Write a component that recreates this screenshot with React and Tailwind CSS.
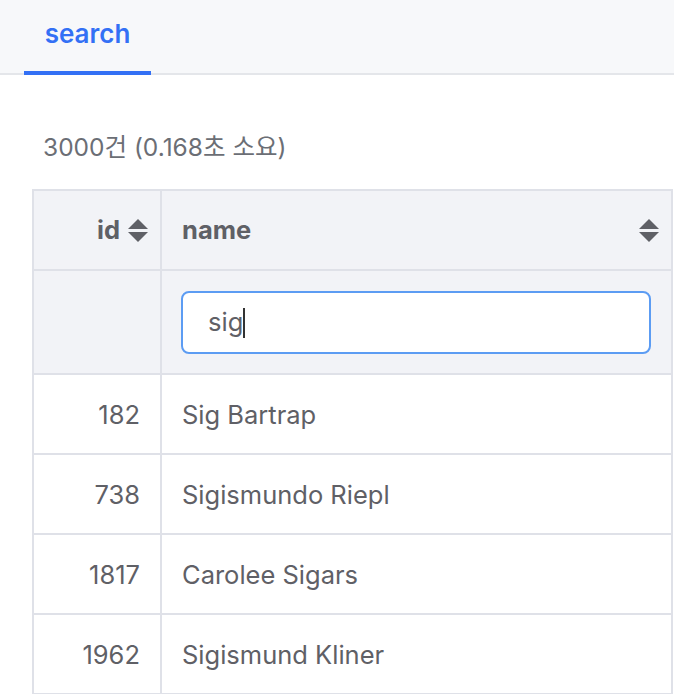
import React from 'react';

// --- sort icon (up / down triangles) ---
const SortIcon = () => (
    <svg width="20" height="23" viewBox="0 0 20 23" className="shrink-0">
        <path d="M10 0 L20 10 L0 10 Z" fill="#5f6066" />
        <path d="M0 13 L20 13 L10 23 Z" fill="#5f6066" />
    </svg>
);

const rows = [
    { id: 182, name: 'Sig Bartrap' },
    { id: 738, name: 'Sigismundo Riepl' },
    { id: 1817, name: 'Carolee Sigars' },
    { id: 1962, name: 'Sigismund Kliner' },
];

const App = () => {
    return (
        <div className="w-[674px] h-[694px] overflow-hidden bg-white font-['Inter','Noto_Sans_CJK_KR',sans-serif]">
            {/* --- tab bar --- */}
            <div className="h-[75px] bg-[#f7f8fa] border-b-2 border-[#e4e6ea] flex items-stretch pl-6">
                <div className="w-[127px] flex items-center justify-center -mb-[2px] border-b-4 border-[#3370f5] text-[26px] font-semibold text-[#3370f5] pb-[4px]">
                    search
                </div>
            </div>

            {/* --- result summary --- */}
            <div className="pl-[43px] pt-[58px] pb-[28px] text-[24.5px] leading-[28px] text-[#6b6e75]">
                3000건 (0.168초 소요)
            </div>

            {/* --- table --- */}
            <div className="ml-8 w-[641px] border-2 border-b-0 border-[#dfe1e8]">
                {/* header */}
                <div className="grid grid-cols-[128px_1fr] bg-[#f2f3f7] border-b-2 border-[#dfe1e8]">
                    <div className="h-[78px] flex items-center justify-end gap-2 pr-3 border-r-2 border-[#dfe1e8] text-[25.5px] font-bold text-[#5f6066]">
                        id <SortIcon />
                    </div>
                    <div className="h-[78px] flex items-center justify-between pl-5 pr-3 text-[25.5px] font-bold text-[#5f6066]">
                        name <SortIcon />
                    </div>
                </div>
                {/* filter row */}
                <div className="grid grid-cols-[128px_1fr] bg-[#f2f3f7] border-b-2 border-[#dfe1e8]">
                    <div className="h-[102px] border-r-2 border-[#dfe1e8]" />
                    <div className="h-[102px] pl-[19px] pr-5 pt-5">
                        <div className="h-[63px] rounded-lg border-2 border-[#5c9cf3] bg-white flex items-center pl-[25px] text-[25.5px] text-[#5f6066]">
                            sig<span className="inline-block w-[2px] h-[30px] bg-[#333]" />
                        </div>
                    </div>
                </div>
                {/* body rows */}
                {rows.map((r) => (
                    <div key={r.id} className="grid grid-cols-[128px_1fr] border-b-2 border-[#dfe1e8] text-[25.5px] text-[#5f6066]">
                        <div className="h-[78px] flex items-center justify-end pr-5 border-r-2 border-[#dfe1e8] pt-[3px]">
                            {r.id}
                        </div>
                        <div className="h-[78px] flex items-center pl-5 pt-[3px]">
                            {r.name}
                        </div>
                    </div>
                ))}
            </div>
        </div>
    );
};

export default App;
